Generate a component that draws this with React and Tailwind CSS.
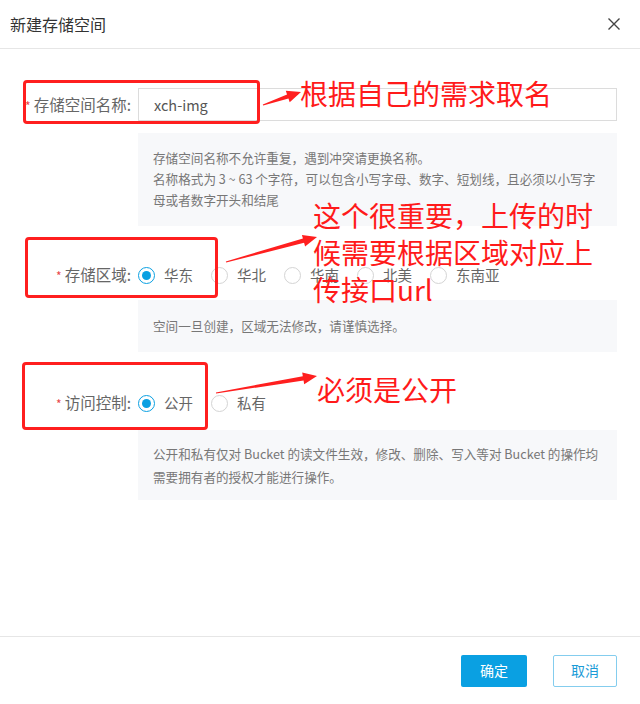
import React from 'react';

const font = { fontFamily: '"Noto Sans CJK SC", "Noto Sans", sans-serif' };

// tapered arrow polygon from start to end
const arrowPoints = (sx, sy, ex, ey) => {
  const len = Math.hypot(ex - sx, ey - sy);
  const dx = (ex - sx) / len;
  const dy = (ey - sy) / len;
  const nx = -dy;
  const ny = dx;
  const head = 14;
  const bx = ex - dx * head;
  const by = ey - dy * head;
  const pts = [
    [sx + nx * 0.6, sy + ny * 0.6],
    [bx + nx * 2.2, by + ny * 2.2],
    [bx + nx * 6, by + ny * 6],
    [ex, ey],
    [bx - nx * 6, by - ny * 6],
    [bx - nx * 2.2, by - ny * 2.2],
    [sx - nx * 0.6, sy - ny * 0.6],
  ];
  return pts.map((p) => p.join(',')).join(' ');
};

const Radio = ({ checked, label }) => (
  <label className="flex items-center mr-[18px]">
    <span
      className={
        checked
          ? 'w-[17px] h-[17px] rounded-full border border-[#0aa0e2] bg-white flex items-center justify-center'
          : 'w-[17px] h-[17px] rounded-full border border-[#d4d4d4] bg-white'
      }
    >
      {checked && <span className="w-[9px] h-[9px] rounded-full bg-[#0aa0e2]"></span>}
    </span>
    <span className="ml-[9px] text-[14.5px] text-[#666]">{label}</span>
  </label>
);

const Label = ({ text }) => (
  <div className="w-[118px] text-right text-[15.5px] text-[#666] pr-[7px] shrink-0">
    <span className="text-[#e8474b] text-[12px] mr-[3px]">*</span>
    {text}
  </div>
);

const App = () => {
  return (
    <div className="relative w-[640px] h-[704px] bg-white flex flex-col overflow-hidden" style={font}>
      {/* Header */}
      <div className="h-[49px] border-b border-[#e6e6e6] flex items-center justify-between pl-[10px] pr-[19px] shrink-0">
        <span className="text-[16px] text-[#333]">新建存储空间</span>
        <svg width="14" height="14" viewBox="0 0 14 14">
          <path d="M1.5 1.5 L12.5 12.5 M12.5 1.5 L1.5 12.5" stroke="#444" strokeWidth="1.4" fill="none" />
        </svg>
      </div>

      {/* Body */}
      <div className="flex-1 pt-[39px] pl-[20px] pr-[23px]">
        {/* Bucket name */}
        <div className="flex items-center">
          <Label text="存储空间名称:" />
          <div className="flex-1 h-[33px] border border-[#dcdcdc] flex items-center pl-[15px] text-[14.5px] text-[#555]">
            xch-img
          </div>
        </div>
        <div className="ml-[118px] mt-[12px] h-[93px] bg-[#f7f8fa] pt-[14px] pl-[15px] pr-[14px] text-[12.6px] leading-[21px] text-[#777]">
          <p>存储空间名称不允许重复，遇到冲突请更换名称。</p>
          <p>名称格式为 3 ~ 63 个字符，可以包含小写字母、数字、短划线，且必须以小写字母或者数字开头和结尾</p>
        </div>

        {/* Region */}
        <div className="flex items-center mt-[33px] h-[32px]">
          <Label text="存储区域:" />
          <div className="flex items-center">
            <Radio checked label="华东" />
            <Radio label="华北" />
            <Radio label="华南" />
            <Radio label="北美" />
            <Radio label="东南亚" />
          </div>
        </div>
        <div className="ml-[118px] mt-[9px] h-[52px] bg-[#f7f8fa] pl-[15px] flex items-center text-[12.6px] text-[#777]">
          空间一旦创建，区域无法修改，请谨慎选择。
        </div>

        {/* Access */}
        <div className="flex items-center mt-[35px] h-[32px]">
          <Label text="访问控制:" />
          <div className="flex items-center">
            <Radio checked label="公开" />
            <Radio label="私有" />
          </div>
        </div>
        <div className="ml-[118px] mt-[11px] h-[70px] bg-[#f7f8fa] pt-[12px] pl-[15px] pr-[14px] text-[12.6px] leading-[23px] text-[#777]">
          <p>公开和私有仅对 Bucket 的读文件生效，修改、删除、写入等对 Bucket 的操作均需要拥有者的授权才能进行操作。</p>
        </div>
      </div>

      {/* Footer */}
      <div className="h-[68px] border-t border-[#e6e6e6] flex items-center justify-end pr-[23px] shrink-0">
        <button className="w-[66px] h-[32px] rounded-[2px] bg-[#0aa0e2] text-white text-[14px] mr-[26px]">确定</button>
        <button className="w-[64px] h-[32px] rounded-[2px] border border-[#84cdee] bg-white text-[#1a9bd7] text-[14px]">取消</button>
      </div>

      {/* Annotations */}
      <div className="absolute left-[23px] top-[80px] w-[237px] h-[44px] border-[3px] border-[#ff1f1f] rounded-[4px]"></div>
      <div className="absolute left-[25px] top-[237px] w-[193px] h-[61px] border-[3px] border-[#ff1f1f] rounded-[4px]"></div>
      <div className="absolute left-[22px] top-[362px] w-[186px] h-[68px] border-[3px] border-[#ff1f1f] rounded-[4px]"></div>

      <svg className="absolute left-0 top-0 pointer-events-none" width="640" height="704">
        <polygon points={arrowPoints(263, 105, 301, 92)} fill="#ff1f1f" />
        <polygon points={arrowPoints(226, 262, 317, 237)} fill="#ff1f1f" />
        <polygon points={arrowPoints(216, 393, 317, 376)} fill="#ff1f1f" />
      </svg>

      <div className="absolute left-[300px] top-[79px] text-[28px] leading-[28px] text-[#ff1a1a] whitespace-nowrap">
        根据自己的需求取名
      </div>
      <div className="absolute left-[313px] top-[197px] text-[28px] leading-[37px] text-[#ff1a1a] whitespace-nowrap">
        <p>这个很重要，上传的时</p>
        <p>候需要根据区域对应上</p>
        <p>传接口url</p>
      </div>
      <div className="absolute left-[317px] top-[375px] text-[28px] leading-[28px] text-[#ff1a1a] whitespace-nowrap">
        必须是公开
      </div>
    </div>
  );
};

export default App;
